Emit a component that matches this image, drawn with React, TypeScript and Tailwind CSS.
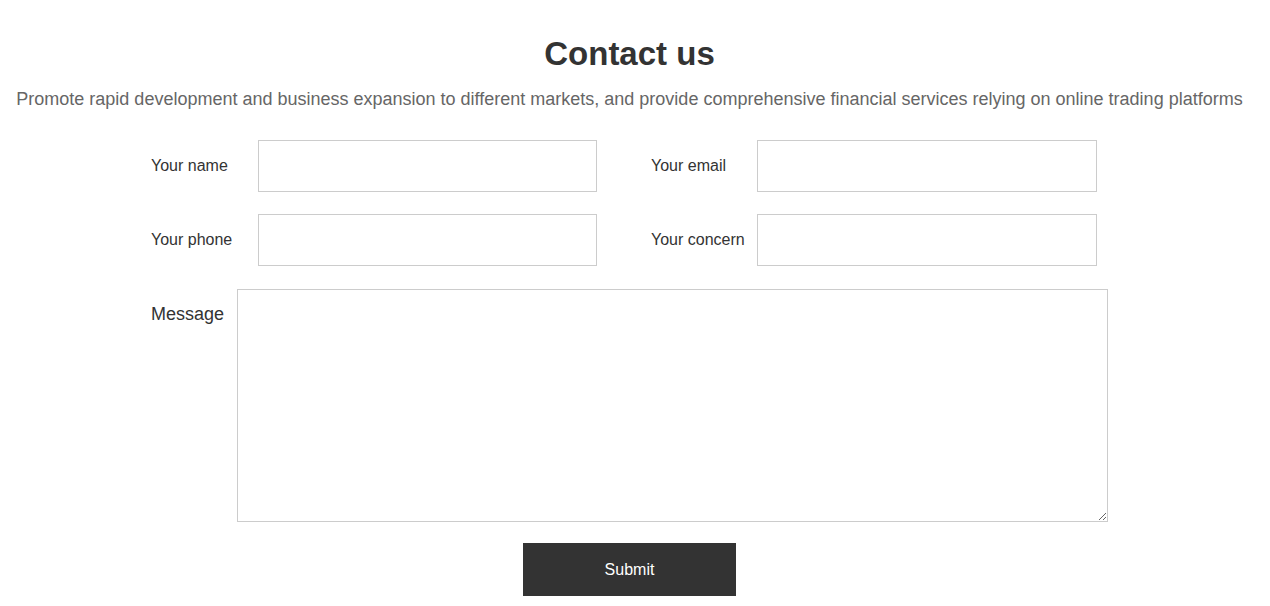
export default function App() {
  const rows = [
    ["Your name", "Your email"],
    ["Your phone", "Your concern"],
  ];

  return (
    <div className="min-h-screen bg-white pr-[11px] font-['Liberation_Sans',Arial,sans-serif] text-[#333]">
      <div className="pt-[34px] text-center">
        <h2 className="text-[33px] font-semibold leading-[40px]">Contact us</h2>
        <p className="mt-[13px] text-[18px] leading-[24px] text-[#666]">
          Promote rapid development and business expansion to different markets, and provide comprehensive financial services relying on online trading platforms
        </p>
      </div>

      <form className="mx-auto mt-[29px] w-[957px]" onSubmit={(e) => e.preventDefault()}>
        <div className="flex flex-col gap-[22px]">
          {rows.map((row) => (
            <div key={row[0]} className="flex gap-[54px]">
              <div className="flex w-[446px] items-center">
                <label className="w-[107px] shrink-0 text-[16px]">{row[0]}</label>
                <input
                  type="text"
                  className="h-[52px] w-[339px] border border-[#ccc] bg-white px-3 outline-none"
                />
              </div>
              <div className="flex w-[446px] items-center">
                <label className="w-[106px] shrink-0 text-[16px]">{row[1]}</label>
                <input
                  type="text"
                  className="h-[52px] w-[340px] border border-[#ccc] bg-white px-3 outline-none"
                />
              </div>
            </div>
          ))}
        </div>

        <div className="mt-[23px] flex">
          <label className="w-[86px] shrink-0 pt-[12px] text-[18px]">Message</label>
          <textarea className="h-[233px] w-[871px] border border-[#ccc] bg-white p-3 outline-none" />
        </div>

        <div className="mt-[21px] flex justify-center">
          <button
            type="submit"
            className="h-[53px] w-[213px] bg-[#333] text-[16px] text-white"
          >
            Submit
          </button>
        </div>
      </form>
    </div>
  );
}
